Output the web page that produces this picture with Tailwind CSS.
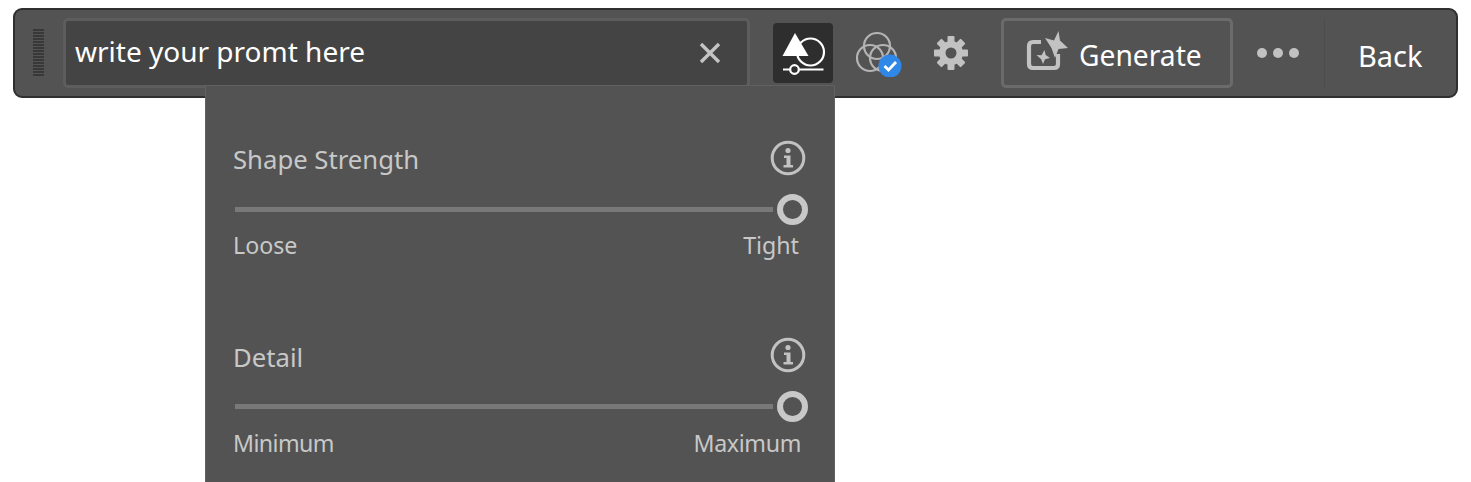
<!DOCTYPE html>
<html lang="en">
<head>
  <meta charset="UTF-8" />
  <title>Prompt Toolbar</title>
  <script src="https://cdn.jsdelivr.net/npm/@tailwindcss/browser@4"></script>
</head>
<body class="bg-white h-[482px] overflow-hidden font-['Noto_Sans',sans-serif]">
  <div class="relative pt-2 pl-[13px]">
    <!-- Toolbar -->
    <header class="w-[1445px] h-[90px] bg-[#535353] border-2 border-[#2f2f2f] rounded-[9px] flex items-center">
      <!-- Grip -->
      <div class="w-[11px] h-[48px] ml-[18px] shrink-0 bg-[repeating-linear-gradient(to_bottom,#383838_0,#383838_2px,#535353_2px,#535353_3px)]"></div>

      <!-- Prompt input -->
      <div class="ml-[19px] w-[687px] h-[70px] shrink-0 bg-[#444444] border-[3px] border-[#5d5d5d] rounded-[5px] flex items-center justify-between pl-[9px] pr-[26px]">
        <span class="text-[28px] text-white leading-none relative -top-[2px]">write your promt here</span>
        <svg width="22" height="22" viewBox="0 0 22 22" class="text-[#c4c4c4]"><path d="M2 2 L20 20 M20 2 L2 20" stroke="currentColor" stroke-width="3.4"/></svg>
      </div>

      <!-- Shape icon (active) -->
      <div class="ml-[23px] w-[60px] h-[60px] shrink-0 bg-[#2e2e2e] rounded-[4px] flex items-center justify-center">
        <svg width="46" height="46" viewBox="0 0 46 46" fill="none">
          <circle cx="30.5" cy="22" r="13.5" stroke="white" stroke-width="2.2"/>
          <path d="M15 3 L28.5 26 H2.5 Z" fill="white"/>
          <path d="M3 39.5 H10 M19 39.5 H43.5" stroke="white" stroke-width="2.2"/>
          <circle cx="14.5" cy="39.5" r="4.3" stroke="white" stroke-width="2.2"/>
        </svg>
      </div>

      <!-- Colour circles with check -->
      <div class="ml-[22px] w-[48px] h-[48px] shrink-0 relative">
        <svg width="48" height="48" viewBox="0 0 48 48" fill="none" stroke="#b4b4b4" stroke-width="2.2">
          <circle cx="22" cy="17" r="13"/>
          <circle cx="15" cy="29" r="13"/>
          <circle cx="28" cy="29" r="13"/>
          <circle cx="35" cy="37" r="11.5" fill="#2f88e8" stroke="none"/>
          <path d="M29.5 37 L33.5 41 L41 33" stroke="white" stroke-width="2.8"/>
        </svg>
      </div>

      <!-- Gear -->
      <svg class="ml-[30px] shrink-0" width="36" height="36" viewBox="0 0 36 36">
        <g fill="#c2c2c2">
          <rect x="14.5" y="1" width="7" height="34" rx="1"/>
          <rect x="14.5" y="1" width="7" height="34" rx="1" transform="rotate(45 18 18)"/>
          <rect x="14.5" y="1" width="7" height="34" rx="1" transform="rotate(90 18 18)"/>
          <rect x="14.5" y="1" width="7" height="34" rx="1" transform="rotate(135 18 18)"/>
          <circle cx="18" cy="18" r="12"/>
        </g>
        <circle cx="18" cy="18" r="5.5" fill="#535353"/>
      </svg>

      <!-- Generate -->
      <button class="ml-[32px] w-[232px] h-[70px] shrink-0 border-[3px] border-[#6b6b6b] rounded-[5px] flex items-center pl-[22px]">
        <svg width="42" height="44" viewBox="0 0 42 44" fill="none">
          <path d="M15 11 H7 Q3 11 3 15 V33 Q3 37 7 37 H28 Q32 37 32 33 V23" stroke="#c2c2c2" stroke-width="4.2"/>
          <path d="M32.5 0 L34 9.5 L42 17 L32.5 18 L29 27 L25.5 17 L19 7 L28 9.5 Z" fill="#c2c2c2"/>
          <path d="M18.5 19 L19.7 24 L24 27 L19 28.3 L17 33 L15.2 28.3 L10.5 24 L15.5 24.3 Z" fill="#c2c2c2"/>
        </svg>
        <span class="ml-[11px] text-[28.2px] text-white leading-none relative top-[2px]">Generate</span>
      </button>

      <!-- More -->
      <div class="ml-[24px] w-[42px] flex justify-between shrink-0">
        <span class="w-[10px] h-[10px] rounded-full bg-[#c2c2c2]"></span>
        <span class="w-[10px] h-[10px] rounded-full bg-[#c2c2c2]"></span>
        <span class="w-[10px] h-[10px] rounded-full bg-[#c2c2c2]"></span>
      </div>
      <div class="ml-[25px] w-px h-[70px] bg-[#4d4d4d] shrink-0"></div>

      <span class="ml-[33px] text-[29px] text-white leading-none relative top-[2px]">Back</span>
    </header>

    <!-- Dropdown panel -->
    <div class="absolute left-[205px] top-[85px] w-[630px] h-[397px] bg-[#535353] border border-[#616161] border-b-0 pl-[27px] pr-[27px]">
      <section class="pt-[56px]">
        <div class="flex items-center justify-between h-[36px]">
          <span class="text-[25.7px] text-[#c8c8c8] leading-none">Shape Strength</span>
          <svg width="36" height="36" viewBox="0 0 36 36" fill="none" class="relative -top-[2px] -left-[1px]">
            <circle cx="18" cy="18" r="15.8" stroke="#c2c2c2" stroke-width="3"/>
            <circle cx="18" cy="10.5" r="2.6" fill="#c2c2c2"/>
            <path d="M14 15.5 H20.5 V25 H23 V27.5 H13.5 V25 H16.5 V18 H14 Z" fill="#c2c2c2"/>
          </svg>
        </div>
        <div class="flex items-center h-[31px] mt-[16px] pl-[2px]">
          <div class="w-[538px] h-[5px] shrink-0 bg-[#797979]"></div>
          <div class="ml-[4px] w-[31px] h-[31px] shrink-0 border-[6px] border-[#c8c8c8] rounded-full"></div>
        </div>
        <div class="flex justify-between mt-[9px] pr-[8px]">
          <span class="text-[23.2px] text-[#c8c8c8] leading-none">Loose</span>
          <span class="text-[23.2px] text-[#c8c8c8] leading-none">Tight</span>
        </div>
      </section>
      <section class="pt-[82px]">
        <div class="flex items-center justify-between h-[36px]">
          <span class="text-[25.7px] text-[#c8c8c8] leading-none relative top-[1px]">Detail</span>
          <svg width="36" height="36" viewBox="0 0 36 36" fill="none" class="relative -top-[2px] -left-[1px]">
            <circle cx="18" cy="18" r="15.8" stroke="#c2c2c2" stroke-width="3"/>
            <circle cx="18" cy="10.5" r="2.6" fill="#c2c2c2"/>
            <path d="M14 15.5 H20.5 V25 H23 V27.5 H13.5 V25 H16.5 V18 H14 Z" fill="#c2c2c2"/>
          </svg>
        </div>
        <div class="flex items-center h-[31px] mt-[16px] pl-[2px]">
          <div class="w-[538px] h-[5px] shrink-0 bg-[#797979]"></div>
          <div class="ml-[4px] w-[31px] h-[31px] shrink-0 border-[6px] border-[#c8c8c8] rounded-full"></div>
        </div>
        <div class="flex justify-between mt-[10px] pr-[6px]">
          <span class="text-[23.2px] tracking-[-0.6px] text-[#c8c8c8] leading-none">Minimum</span>
          <span class="text-[23.2px] tracking-[-0.35px] text-[#c8c8c8] leading-none">Maximum</span>
        </div>
      </section>
    </div>
  </div>
</body>
</html>
